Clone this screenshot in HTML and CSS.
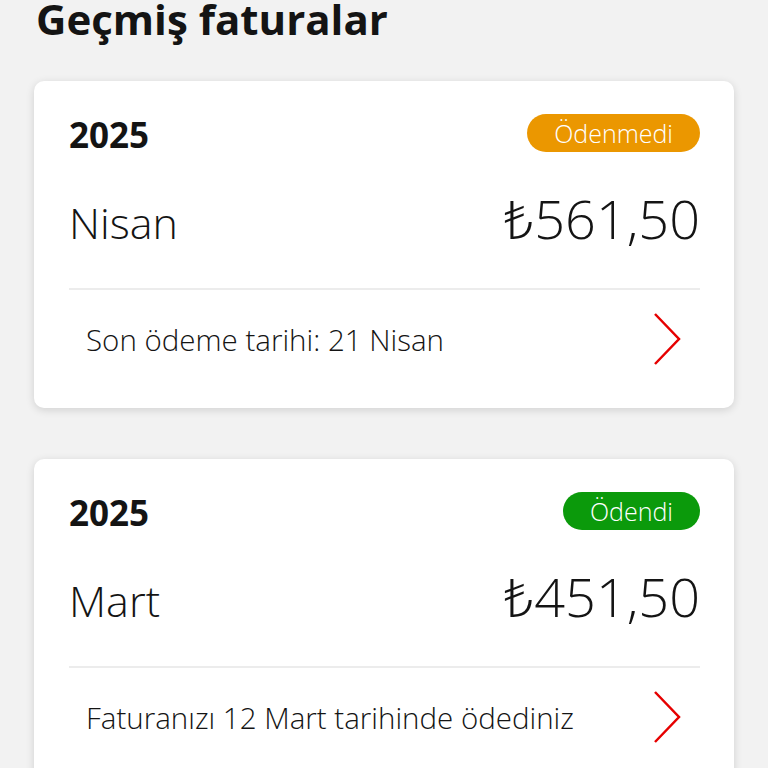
FILE: index.html
```html
<!DOCTYPE html>
<html lang="tr">
<head>
    <meta charset="UTF-8">
    <meta name="viewport" content="width=device-width, initial-scale=1.0">
    <title>Geçmiş faturalar</title>
    <link rel="stylesheet" href="styles.css">
</head>
<body>
    <h1 class="page-title">Geçmiş faturalar</h1>

    <!-- Bill list -->
    <div class="bill-list">
        <div class="bill-card">
            <div class="bill-head">
                <div class="bill-row">
                    <span class="bill-year">2025</span>
                    <span class="badge badge-unpaid">Ödenmedi</span>
                </div>
                <div class="bill-row bill-amount-row">
                    <span class="bill-month">Nisan</span>
                    <span class="bill-amount">₺561,50</span>
                </div>
            </div>
            <div class="bill-foot">
                <span class="bill-note">Son ödeme tarihi: 21 Nisan</span>
                <svg class="chevron" width="30" height="54" viewBox="0 0 30 54">
                    <path d="M3 2 L27 27 L3 52" fill="none" stroke="#e60000" stroke-width="2.5"/>
                </svg>
            </div>
        </div>

        <div class="bill-card">
            <div class="bill-head">
                <div class="bill-row">
                    <span class="bill-year">2025</span>
                    <span class="badge badge-paid">Ödendi</span>
                </div>
                <div class="bill-row bill-amount-row">
                    <span class="bill-month">Mart</span>
                    <span class="bill-amount">₺451,50</span>
                </div>
            </div>
            <div class="bill-foot">
                <span class="bill-note">Faturanızı 12 Mart tarihinde ödediniz</span>
                <svg class="chevron" width="30" height="54" viewBox="0 0 30 54">
                    <path d="M3 2 L27 27 L3 52" fill="none" stroke="#e60000" stroke-width="2.5"/>
                </svg>
            </div>
        </div>
    </div>
</body>
</html>
```

FILE: styles.css
```css
body {
    font-family: "Open Sans", "Noto Sans", sans-serif;
    margin: 0;
    padding: 0 34px;
    background-color: #f2f2f2;
    color: #141414;
}

.page-title {
    margin: 0;
    padding-left: 2px;
    font-size: 42px;
    font-weight: 700;
    line-height: 42px;
    margin-top: -2px;
    margin-bottom: 41px;
}

.bill-card {
    background: white;
    border-radius: 10px;
    box-shadow: 0 2px 8px rgba(0, 0, 0, 0.14);
    margin-bottom: 51px;
}

.bill-head {
    padding: 33px 34px 0 35px;
}

.bill-row {
    display: flex;
    justify-content: space-between;
    align-items: center;
    height: 38px;
}

.bill-year {
    font-size: 35px;
    font-weight: 700;
    line-height: 38px;
    padding-top: 4px;
}

.badge {
    color: white;
    font-size: 25px;
    font-weight: 300;
    line-height: 38px;
    height: 38px;
    padding: 0 27px;
    border-radius: 19px;
}

.badge-unpaid {
    background-color: #eb9700;
}

.badge-paid {
    background-color: #0b9a0b;
}

.bill-amount-row {
    align-items: baseline;
    height: 56px;
    margin-top: 38px;
    padding-bottom: 42px;
}

.bill-month {
    font-size: 43px;
    font-weight: 300;
    line-height: 56px;
}

.bill-amount {
    font-size: 54px;
    font-weight: 300;
    line-height: 56px;
}

.bill-foot {
    display: flex;
    justify-content: space-between;
    align-items: center;
    margin: 0 34px 0 35px;
    padding: 22px 18px 42px 17px;
    border-top: 2px solid #ececec;
}

.bill-note {
    font-size: 29.5px;
    font-weight: 350;
}

.chevron {
    display: block;
}
```
